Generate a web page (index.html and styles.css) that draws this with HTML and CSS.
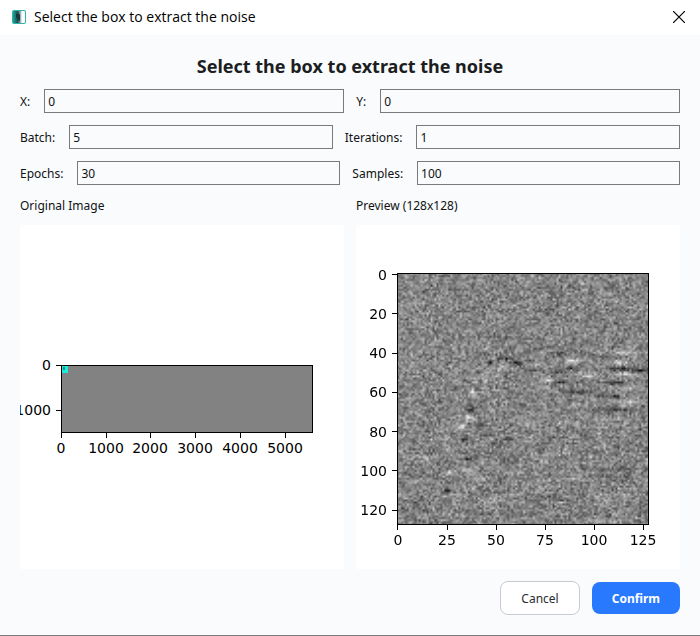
FILE: index.html
```html
<!DOCTYPE html>
<html lang="en">
<head>
<meta charset="utf-8">
<title>Select the box to extract the noise</title>
<link rel="stylesheet" href="styles.css">
</head>
<body>
<div class="dialog">
  <header class="titlebar">
    <svg class="app-icon" viewBox="0 0 14 14" aria-hidden="true">
      <defs>
        <linearGradient id="fade"><stop offset="0" stop-color="#1fa396"/><stop offset=".4" stop-color="#1b4f50"/><stop offset=".6" stop-color="#8fa3a8"/><stop offset=".75" stop-color="#fff"/></linearGradient>
      </defs>
      <rect width="14" height="14" rx="2" fill="#2fb5a5"/>
      <rect x="1" y="1" width="12" height="12" rx="1" fill="url(#fade)"/>
      <path d="M4 4l2-1 2 2v6l-2-1-2-3z" fill="#163a3c"/>
    </svg>
    <span class="window-title">Select the box to extract the noise</span>
    <button class="close" type="button" aria-label="Close">
      <svg viewBox="0 0 12 12" aria-hidden="true"><path d="M0 0L12 12M12 0L0 12"/></svg>
    </button>
  </header>
  <main class="content">
    <h1>Select the box to extract the noise</h1>
    <form class="fields" id="noise-form">
      <div class="row">
        <label for="x">X:</label><input id="x" type="text" value="0">
        <label for="y">Y:</label><input id="y" type="text" value="0">
      </div>
      <div class="row">
        <label for="batch">Batch:</label><input id="batch" type="text" value="5">
        <label for="iterations">Iterations:</label><input id="iterations" type="text" value="1">
      </div>
      <div class="row">
        <label for="epochs">Epochs:</label><input id="epochs" type="text" value="30">
        <label for="samples">Samples:</label><input id="samples" type="text" value="100">
      </div>
    </form>
    <div class="plots">
      <figure>
        <figcaption>Original Image</figcaption>
        <svg class="plot" viewBox="0 0 324 344">
          <rect class="trace" x="41.5" y="140.5" width="251" height="67"/>
          <rect x="42" y="141" width="6" height="7" fill="#18eddc"/>
          <rect x="43" y="142" width="2" height="3" fill="#35847f"/>
          <rect class="frame" x="41.5" y="140.5" width="251" height="67"/>
          <path class="ticks" d="M41.5 208v5M86.5 208v5M130.5 208v5M175.5 208v5M220.5 208v5M265.5 208v5M41 140.5h-5M41 185.5h-5"/>
          <g class="x-labels">
            <text x="41" y="228">0</text><text x="86" y="228">1000</text><text x="130" y="228">2000</text><text x="175" y="228">3000</text><text x="220" y="228">4000</text><text x="265" y="228">5000</text>
          </g>
          <g class="y-labels"><text x="31" y="145">0</text><text x="31" y="190">1000</text></g>
        </svg>
      </figure>
      <figure>
        <figcaption>Preview (128x128)</figcaption>
        <svg class="plot" viewBox="0 0 324 344">
          <foreignObject x="41" y="48" width="252" height="252"><canvas id="preview" width="128" height="128"></canvas></foreignObject>
          <rect class="frame" x="41.5" y="48.5" width="251" height="251"/>
          <path class="ticks" d="M41.5 300v5M91.5 300v5M140.5 300v5M189.5 300v5M238.5 300v5M287.5 300v5M41 49.5h-5M41 88.5h-5M41 128.5h-5M41 167.5h-5M41 206.5h-5M41 245.5h-5M41 285.5h-5"/>
          <g class="x-labels">
            <text x="42" y="320">0</text><text x="91" y="320">25</text><text x="140" y="320">50</text><text x="189" y="320">75</text><text x="238" y="320">100</text><text x="287" y="320">125</text>
          </g>
          <g class="y-labels">
            <text x="31" y="55">0</text><text x="31" y="94">20</text><text x="31" y="133">40</text><text x="31" y="172">60</text><text x="31" y="212">80</text><text x="31" y="251">100</text><text x="31" y="290">120</text>
          </g>
        </svg>
      </figure>
    </div>
    <div class="actions">
      <button class="cancel" type="button">Cancel</button>
      <button class="confirm" type="submit" form="noise-form">Confirm</button>
    </div>
  </main>
</div>
<script src="preview.js"></script>
</body>
</html>
```
FILE: styles.css
```css
* { box-sizing: border-box; }
body {
  margin: 0;
  font: 12px/16px "Noto Sans", sans-serif;
  color: #101214;
  background: #f9fbfd;
}
.dialog {
  display: flex;
  flex-direction: column;
  min-height: 100vh;
  border-bottom: 1px solid #77797b;
}
.titlebar {
  display: flex;
  align-items: center;
  gap: 8px;
  height: 35px;
  padding: 0 14px 2px 12px;
  background: #fff;
}
.app-icon { width: 14px; height: 14px; }
.window-title { flex: 1; font-family: "Open Sans", sans-serif; font-size: 14px; line-height: 20px; color: #000; }
.close { display: flex; padding: 1px; border: 0; background: none; }
.close svg { width: 12px; height: 12px; stroke: #000; stroke-width: 1.2; }
.content { display: flex; flex-direction: column; padding: 19px 20px 20px; }
h1 { margin: 0 0 11px; font: 700 18px/24px "Noto Sans", sans-serif; text-align: center; color: #1c1e21; }
.fields { display: grid; gap: 12px; }
.row { display: flex; align-items: center; gap: 12px; }
label { padding: 1px 2px 0 0; }
input {
  flex: 1;
  min-width: 0;
  height: 24px;
  padding: 1px 3px 0;
  border: 1px solid #7a7a7c;
  background: #f9fbfd;
  color: inherit;
  font: inherit;
}
.plots { display: grid; grid-template-columns: 1fr 1fr; gap: 12px; margin-top: 13px; }
figure { margin: 0; }
figcaption { margin-bottom: 11px; }
.plot { display: block; width: 100%; background: #fff; overflow: hidden; }
.plot text { font: 14px "DejaVu Sans", sans-serif; fill: #000; }
.trace { fill: #828282; }
.frame, .ticks { fill: none; stroke: #000; stroke-width: 1; }
.x-labels { text-anchor: middle; }
.y-labels { text-anchor: end; }
canvas { display: block; width: 252px; height: 252px; }
.actions { display: flex; justify-content: flex-end; align-items: center; gap: 12px; margin-top: 12px; }
.actions button { height: 34px; padding: 1px 20px 0; border: 1px solid #c9cbd3; border-radius: 8px; background: #fff; color: #2b2d30; font: inherit; }
.actions .confirm { height: 32px; border: 0; background: #2979ff; color: #fff; font-weight: 700; }
```
FILE: preview.js
```js
const canvas = document.getElementById("preview");
const ctx = canvas.getContext("2d");
const size = 128;
const image = ctx.createImageData(size, size);

// Seeded generator keeps the preview stable between loads.
let seed = 90217;
function random() {
  seed = (seed * 1664525 + 1013904223) >>> 0;
  return seed / 4294967296;
}
function gaussian() {
  return random() + random() + random() + random() - 2;
}

// Signal streaks: centre x, centre y, half width, half height, brightness.
const streaks = [
  [54, 43, 5, 1, -75], [60, 45, 3, 1, -75], [47, 45, 1, 1, -80], [53, 48, 5, 1, 45],
  [89, 44, 4, 1, 75], [88, 48, 4, 1, -60], [112, 45, 5, 1, 65], [111, 48, 5, 1, -100],
  [123, 49, 5, 1, -90], [116, 51, 6, 1, 75], [110, 55, 5, 1, -75], [115, 58, 6, 1, 65],
  [90, 60, 6, 1, -75], [111, 62, 2, 1, -100], [104, 62, 4, 1, -60], [119, 65, 7, 1, 65],
  [111, 69, 9, 1, -55], [92, 67, 6, 1, 45], [76, 54, 3, 1, 75], [81, 50, 3, 1, -65],
  [82, 41, 3, 1, -65], [104, 42, 6, 1, -45], [115, 40, 5, 1, 55],
  [69, 49, 3, 1, -40], [72, 46, 4, 1, 45], [84, 55, 3, 1, -55], [97, 52, 4, 1, 50],
  [37, 68, 2, 3, -60], [36, 73, 3, 1, 80], [32, 78, 2, 2, 75], [34, 84, 2, 1, -90],
  [42, 76, 2, 3, -50], [38, 60, 1, 2, 75], [44, 54, 1, 4, 55], [36, 100, 3, 1, 65],
  [26, 101, 2, 1, 65], [25, 110, 1, 1, -75], [36, 94, 4, 1, -50], [56, 84, 4, 1, -45],
  [107, 113, 8, 3, 20], [112, 99, 10, 1, -35], [112, 74, 12, 1, 30]
];

for (let y = 0; y < size; y++) {
  let drift = 0;
  for (let x = 0; x < size; x++) {
    drift = drift * 0.7 + gaussian() * (y > 75 ? 12 : 6);
    let value = 133 + gaussian() * 46 + drift;
    const strength = 0.6 + random() * 0.7;
    for (const [cx, cy, rx, ry, level] of streaks) {
      const dx = (x - cx) / rx;
      const dy = (y - cy) / ry;
      const distance = dx * dx + dy * dy;
      if (distance < 6) value += level * strength * Math.exp(-distance);
    }
    const i = (y * size + x) * 4;
    image.data[i] = image.data[i + 1] = image.data[i + 2] = value;
    image.data[i + 3] = 255;
  }
}
ctx.putImageData(image, 0, 0);
```
